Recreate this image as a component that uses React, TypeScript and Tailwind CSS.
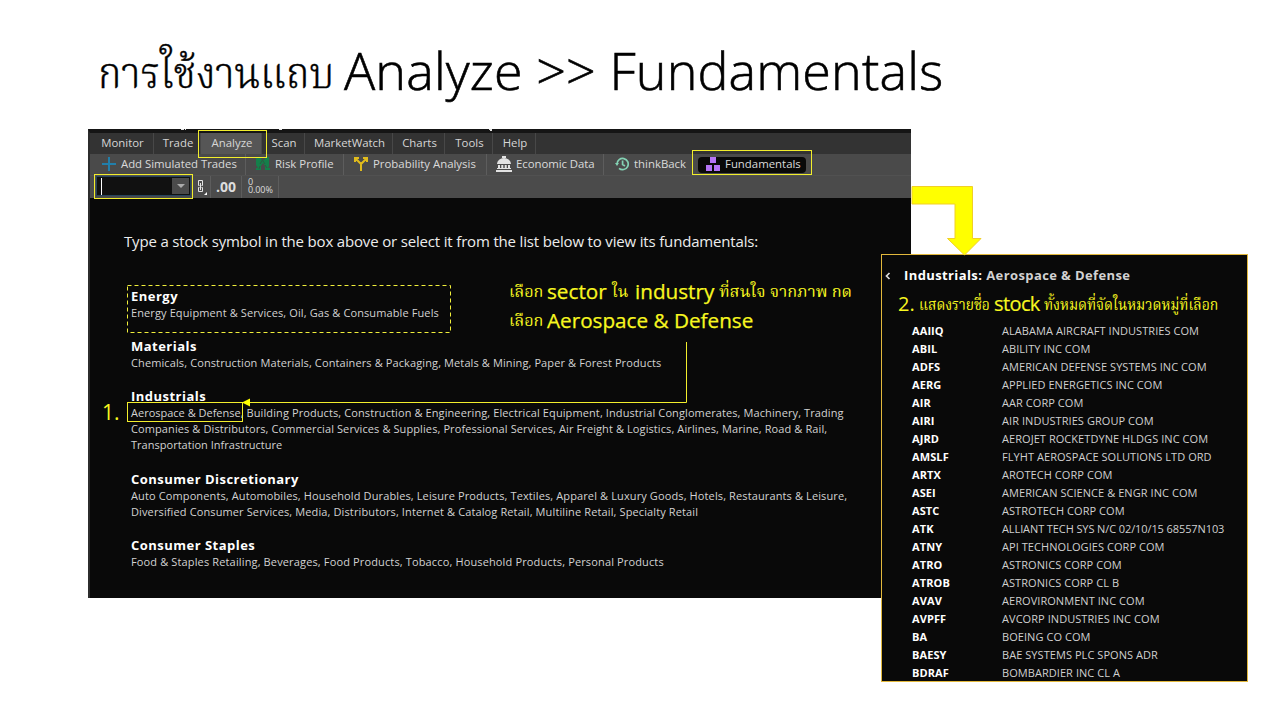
import React from "react";

const sectors = [
  { name: "Energy", lines: ["Energy Equipment & Services, Oil, Gas & Consumable Fuels"], cls: "h-[50px] tracking-[0.11px]" },
  { name: "Materials", lines: ["Chemicals, Construction Materials, Containers & Packaging, Metals & Mining, Paper & Forest Products"], cls: "h-[50px] tracking-[0.11px]" },
  {
    name: "Industrials",
    lines: [
      "Aerospace & Defense, Building Products, Construction & Engineering, Electrical Equipment, Industrial Conglomerates, Machinery, Trading",
      "Companies & Distributors, Commercial Services & Supplies, Professional Services, Air Freight & Logistics, Airlines, Marine, Road & Rail,",
      "Transportation Infrastructure",
    ],
    cls: "h-[83px] tracking-[0.1px]",
  },
  {
    name: "Consumer Discretionary",
    lines: [
      "Auto Components, Automobiles, Household Durables, Leisure Products, Textiles, Apparel & Luxury Goods, Hotels, Restaurants & Leisure,",
      "Diversified Consumer Services, Media, Distributors, Internet & Catalog Retail, Multiline Retail, Specialty Retail",
    ],
    cls: "h-[66px] tracking-[0.12px]",
  },
  { name: "Consumer Staples", lines: ["Food & Staples Retailing, Beverages, Food Products, Tobacco, Household Products, Personal Products"], cls: "h-[50px] tracking-[0.14px]" },
];

const stocks = [
  ["AAIIQ", "ALABAMA AIRCRAFT INDUSTRIES COM"],
  ["ABIL", "ABILITY INC COM"],
  ["ADFS", "AMERICAN DEFENSE SYSTEMS INC COM"],
  ["AERG", "APPLIED ENERGETICS INC COM"],
  ["AIR", "AAR CORP COM"],
  ["AIRI", "AIR INDUSTRIES GROUP COM"],
  ["AJRD", "AEROJET ROCKETDYNE HLDGS INC COM"],
  ["AMSLF", "FLYHT AEROSPACE SOLUTIONS LTD ORD"],
  ["ARTX", "AROTECH CORP COM"],
  ["ASEI", "AMERICAN SCIENCE & ENGR INC COM"],
  ["ASTC", "ASTROTECH CORP COM"],
  ["ATK", "ALLIANT TECH SYS N/C 02/10/15 68557N103"],
  ["ATNY", "API TECHNOLOGIES CORP COM"],
  ["ATRO", "ASTRONICS CORP COM"],
  ["ATROB", "ASTRONICS CORP CL B"],
  ["AVAV", "AEROVIRONMENT INC COM"],
  ["AVPFF", "AVCORP INDUSTRIES INC COM"],
  ["BA", "BOEING CO COM"],
  ["BAESY", "BAE SYSTEMS PLC SPONS ADR"],
  ["BDRAF", "BOMBARDIER INC CL A"],
];

const menu = [
  ["Monitor", "w-[64px]"],
  ["Trade", "w-[47px]"],
  ["Analyze", "w-[61px] bg-[#565656]"],
  ["Scan", "w-[43px]"],
  ["MarketWatch", "w-[88px]"],
  ["Charts", "w-[52px]"],
  ["Tools", "w-[48px]"],
  ["Help", "w-[43px]"],
];

function MenuBar() {
  return (
    <div className="flex h-[21px] bg-[#333333] text-[11.4px] leading-[19px] text-[#d6d6d6]">
      {menu.map(([label, cls]) => (
        <div key={label} className={`${cls} shrink-0 border-r border-[#484848] pl-[2px] text-center whitespace-nowrap`}>
          {label}
        </div>
      ))}
    </div>
  );
}

function ToolBar() {
  return (
    <div className="flex h-[22px] border-b border-[#515151] bg-[#4a4a4a] text-[11.4px] leading-[20px] whitespace-nowrap text-[#dadada]">
      <div className="flex w-[156px] shrink-0 items-center border-r border-[#5d5d5d] pb-px pl-[12px] tracking-[-0.03px]">
        <svg width="14" height="14" viewBox="0 0 14 14" className="mr-[5px] shrink-0">
          <path d="M7 0v14M0 7h14" stroke="#217fab" strokeWidth="2" />
        </svg>
        Add Simulated Trades
      </div>
      <div className="flex w-[98px] shrink-0 items-center border-r border-[#5d5d5d] pb-px pl-[9px]">
        <svg width="15" height="14" viewBox="0 0 15 14" className="mr-[5px] shrink-0">
          <path d="M1 0h4l2 3h2l2-3h3v9l-1 2h2v2h-5V9L8 6 6 9v4H1v-2h2L1 8z" fill="#14804a" />
          <path d="M5 7l2.500-4L10 7M4 12l1-3M12 11l-2-3" stroke="#2c5c42" fill="none" />
        </svg>
        Risk Profile
      </div>
      <div className="flex w-[143px] shrink-0 items-center border-r border-[#5d5d5d] pb-px pl-[10px]">
        <svg width="14" height="14" viewBox="0 0 14 14" className="mr-[5px] shrink-0" fill="none" stroke="#e0bb1c" strokeWidth="2">
          <path d="M7 14V7L1.500 1.500M7 7l5.500-5.500M1 5V1h4M9 1h4v4" />
        </svg>
        Probability Analysis
      </div>
      <div className="flex w-[117px] shrink-0 items-center border-r border-[#5d5d5d] pb-px pl-[9px] tracking-[-0.05px]">
        <svg width="16" height="16" viewBox="0 0 16 16" className="mr-[4px] shrink-0" fill="#e2e2e2">
          <path d="M6 0h4v2H6zM1 8a7 6 0 0 1 14 0zM2 9h2v4H2zM5.300 9h2v4h-2zM8.700 9h2v4h-2zM12 9h2v4h-2zM1 12h14v1H1zM0 14h16v2H0z" />
        </svg>
        Economic Data
      </div>
      <div className="flex w-[88px] shrink-0 items-center pb-px pl-[11px]">
        <svg width="14" height="14" viewBox="0 0 14 14" className="mr-[5px] shrink-0" fill="none" stroke="#84d2b4" strokeWidth="1.700">
          <path d="M2 7a5.600 5.600 0 1 1 2 4.300M7.600 3.500v4L10 9" />
          <path d="M0 6h4L2 9z" fill="#84d2b4" stroke="none" />
        </svg>
        thinkBack
      </div>
      <div className="-mt-[4px] flex h-[25px] w-[120px] shrink-0 items-center border border-[#f2ee2c] pl-[5px]">
        <div className="mt-[4px] flex h-[16px] w-[108px] items-center rounded-[4px] bg-[#090909] pb-px pl-[8px]">
          <svg width="14" height="14" viewBox="0 0 14 14" className="mr-[5px] shrink-0" fill="#b574f5">
            <path d="M4 0h6v6H4zM0 8h6v6H0zM8 8h6v6H8z" />
          </svg>
          Fundamentals
        </div>
      </div>
    </div>
  );
}

function SymbolBar() {
  return (
    <div className="flex h-[22px] bg-[#4b4b4b] text-[#dddddd]">
      <div className="-mt-[2px] ml-[4px] h-[25px] w-[99px] shrink-0 border border-[#f2ee2c] p-px">
        <div className="flex h-[20px] items-center border border-[#26445a] bg-[#111111] pr-px pl-[4px]">
          <div className="h-[17px] w-px bg-white" />
          <div className="ml-auto flex h-[16px] w-[17px] items-center justify-center bg-[#4b4b4b]">
            <svg width="8" height="4" viewBox="0 0 8 4">
              <path d="M0 0h8L4 4z" fill="#aaaaaa" />
            </svg>
          </div>
        </div>
      </div>
      <svg width="12" height="17" viewBox="0 0 12 17" className="mt-[3px] ml-[4px] shrink-0" fill="none" stroke="#e4e4e4">
        <path d="M2.500 6.500h-1v-5h4v5h-1M2.500 8.500h-1v4h4v-4h-1M3.500 4v7" />
        <path d="M10 13v3H7z" fill="#fff" stroke="none" />
      </svg>
      <div className="ml-px w-[32px] shrink-0 border-x border-[#5d5d5d] text-center text-[14px] leading-[22px] font-bold">.00</div>
      <div className="w-[37px] shrink-0 border-r border-[#5d5d5d] pl-[6px] text-[9px] leading-[9px] tracking-[-0.1px]">
        <div className="h-[9px] leading-[11px]">0</div>
        <div className="h-[9px]">0.00%</div>
      </div>
    </div>
  );
}

function SectorList() {
  return (
    <div className="px-[41px] pt-[89px]">
      {sectors.map((s) => (
        <section key={s.name} className={`${s.cls} whitespace-nowrap`}>
          <h2 className="text-[13px] leading-[18px] font-bold tracking-[0.48px] text-white">{s.name}</h2>
          {s.lines.map((l) => {
            const comma = l.startsWith("Aerospace") ? l.indexOf(",") + 1 : 0;
            return (
              <p
                key={l}
                className={`text-[11px] leading-[16px] text-[#d2d2d2] ${l.startsWith("Transportation") ? "tracking-[0.02px]" : ""}`}
              >
                <span className="tracking-normal">{l.slice(0, comma)}</span>
                {l.slice(comma)}
              </p>
            );
          })}
        </section>
      ))}
    </div>
  );
}

function StockPanel() {
  return (
    <div className="absolute top-[254px] left-[881px] h-[428px] w-[367px] overflow-hidden border border-[#e2b83c] bg-[#090909] whitespace-nowrap">
      <div className="flex h-[40px] items-center pt-px pl-[3px] text-[13px] font-bold tracking-[0.39px]">
        <svg width="6" height="8" viewBox="0 0 6 8" className="mr-[13px] shrink-0">
          <path d="M4.500 1L1.500 4l3 3" stroke="#ddd" strokeWidth="1.700" fill="none" />
        </svg>
        <span className="text-white">Industrials:</span>
        <span className="ml-[4px] text-[#d2d2d2]">Aerospace &amp; Defense</span>
      </div>
      <div className="flex h-[27px] items-center pb-[10px] pl-[16px] text-[#f8f820]">
        <span className="w-[21px] text-[20px]">2.</span>
        <span className="w-[75px] origin-left scale-x-[0.86] text-[16px]">แสดงรายชื่อ</span>
        <span className="w-[50px] text-[20px] tracking-[-0.6px] [-webkit-text-stroke:0.2px_#f8f820]">stock</span>
        <span className="w-[174px] origin-left scale-x-[0.875] text-[16px]">ทั้งหมดที่จัดในหมวดหมู่ที่เลือก</span>
      </div>
      <div className="text-[11px] leading-[18px]">
        {stocks.map(([sym, name]) => (
          <div key={sym} className="flex pl-[30px]">
            <span className="w-[90px] shrink-0 font-bold tracking-[0.1px] text-white">{sym}</span>
            <span className={sym === "ATK" ? "tracking-[-0.1px] text-[#d0d0d0]" : "tracking-[0.06px] text-[#d0d0d0]"}>{name}</span>
          </div>
        ))}
      </div>
    </div>
  );
}

export default function App() {
  return (
    <main className="relative h-[720px] w-[1280px] overflow-hidden bg-white font-['Open_Sans',Norasi,Kinnari,'Noto_Serif_Thai','Noto_Sans',sans-serif]">
      <h1 className="flex h-[129px] items-start pl-[98px] font-light whitespace-nowrap text-black">
        <span className="mt-[40px] w-[246px] shrink-0 origin-left scale-x-[0.925] text-[43px] leading-[64px] [-webkit-text-stroke:0.4px_#000]">การใช้งานแถบ</span>
        <span className="mt-[34px] text-[52px] leading-[72px] tracking-[0.14px] [-webkit-text-stroke:0.6px_#000]">Analyze &gt;&gt; Fundamentals</span>
      </h1>
      <div className="ml-[88px] h-[469px] w-[823px] border-t-4 border-l-2 border-t-[#151515] border-l-[#2c2c2c] bg-[#090909]">
        <MenuBar />
        <ToolBar />
        <SymbolBar />
        <div className="h-0">
          <p className="pt-[31px] pl-[34px] text-[15px] leading-[24px] tracking-[-0.17px] whitespace-nowrap text-[#ededed]">
            Type a stock symbol in the box above or select it from the list below to view its fundamentals:
          </p>
        </div>
        <SectorList />
      </div>
      <svg className="absolute top-[129px] left-[180px]" width="314" height="2" fill="#e4e4e4">
        <path d="M1 0h3v1H1zM5 0h1v1H5zM99 0h3v1h-3zM309 0h3v2h-2v-1h-1z" />
      </svg>
      <div className="absolute top-[130px] left-[198px] h-[28px] w-[69px] border border-[#f2ee2c]" />
      <svg className="absolute top-[285px] left-[127px]" width="325" height="49" fill="none" stroke="#f0ee3a">
        <rect x="0.5" y="0.5" width="323" height="47" strokeDasharray="4 3" />
      </svg>
      <div className="absolute top-[402px] left-[127px] h-[20px] w-[116px] border border-[#f2ee2c]" />
      <div className="absolute top-[398px] left-[102px] text-[21px] leading-[28px] text-[#f8f820]">1.</div>
      <svg className="absolute top-[342px] left-[242px]" width="446" height="68">
        <path d="M444.500 0v60.500H6" stroke="#f2ee2c" fill="none" />
        <path d="M0 60.500l8-4v8z" fill="#ffff00" />
      </svg>
      <div className="absolute top-[277px] left-[509px] text-[20.7px] leading-[29px] whitespace-nowrap text-[#f8f820] [-webkit-text-stroke:0.25px_#f8f820]">
        <div className="flex">
          <span className="w-[38px] origin-left scale-x-[1.01] text-[16px] [-webkit-text-stroke:0px]">เลือก</span>
          <span className="w-[65px]">sector</span>
          <span className="w-[23px] origin-left text-[16px] [-webkit-text-stroke:0px]">ใน</span>
          <span className="w-[84px]">industry</span>
          <span className="origin-left scale-x-[1.02] text-[16px] [-webkit-text-stroke:0px]">ที่สนใจ จากภาพ กด</span>
        </div>
        <div className="flex">
          <span className="w-[38px] origin-left scale-x-[1.01] text-[16px] [-webkit-text-stroke:0px]">เลือก</span>
          <span>Aerospace &amp; Defense</span>
        </div>
      </div>
      <StockPanel />
      <svg className="absolute top-[185px] left-[911px]" width="72" height="72">
        <path d="M1 1.500h60.500v52H70L53.500 70 36.500 53.500h7.500V19H1z" fill="#ffff00" stroke="#f0cf28" />
      </svg>
    </main>
  );
}
